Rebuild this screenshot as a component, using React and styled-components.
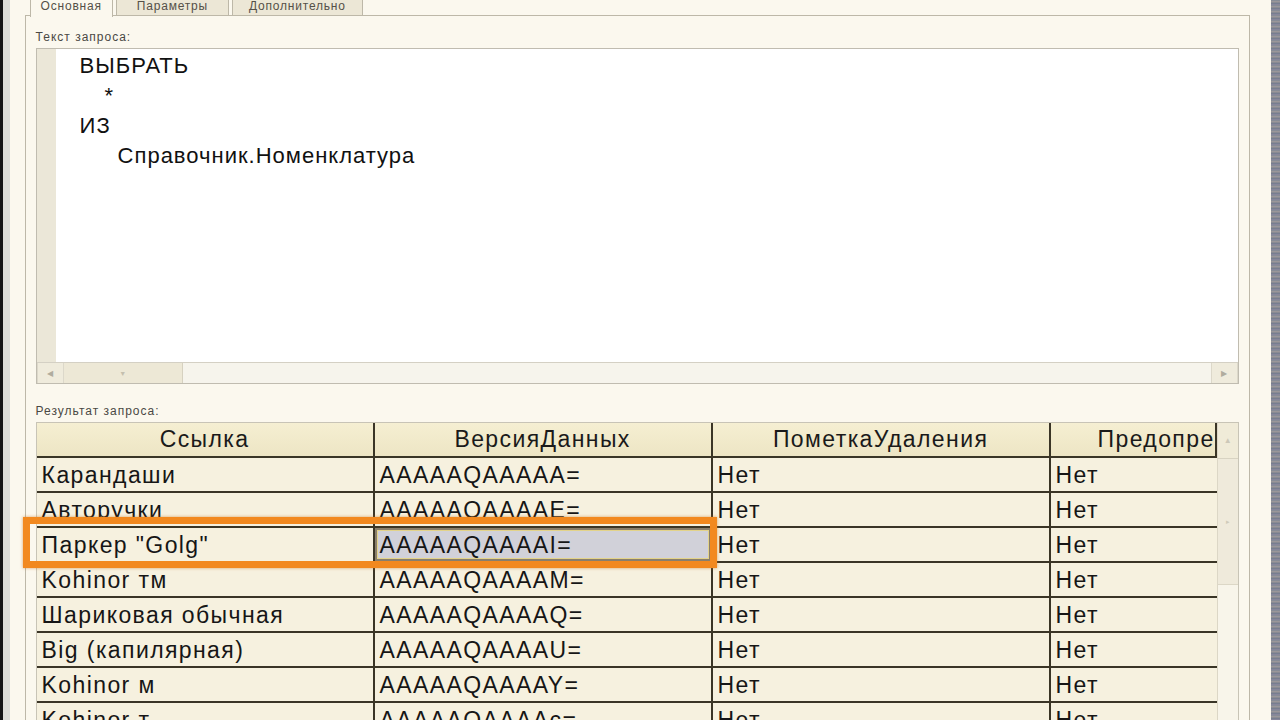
import React from "react";
import styled, { createGlobalStyle } from "styled-components";

const GlobalStyle = createGlobalStyle`
  html, body {
    margin: 0;
    padding: 0;
    background: #fbf8ee;
    font-family: "Liberation Sans", Arial, sans-serif;
  }
`;

const Screen = styled.div`
  display: flex;
  width: 1280px;
  height: 720px;
  overflow: hidden;
`;

const LeftFrame = styled.div`
  width: 7px;
  border-left: 3px solid #141414;
  background: #dcdcd6;
`;

const Desktop = styled.div`
  width: 10px;
  background: repeating-linear-gradient(
    0deg,
    #8f8aa0 0px,
    #6f7a8a 2px,
    #a49c9c 3px,
    #7c8694 5px
  );
`;

const Window = styled.div`
  flex: 1;
  display: flex;
  flex-direction: column;
  background: #fbf8ee;
  padding: 0 21px 0 15px;
`;

const TabStrip = styled.div`
  display: flex;
  height: 16px;
  padding-left: 5px;
  gap: 3px;
`;

const Tab = styled.div`
  height: ${(p) => (p.$active ? "17px" : "16px")};
  padding: 0 ${(p) => (p.$active ? "10px" : `${p.$pad || 20}px`)};
  box-sizing: border-box;
  border: 1px solid #bdb8a8;
  border-top: none;
  border-bottom: ${(p) => (p.$active ? "none" : "1px solid #bdb8a8")};
  background: ${(p) => (p.$active ? "#fbf8ee" : "#ece7d6")};
  color: #555048;
  font-size: 12px;
  letter-spacing: 0.8px;
  line-height: 12px;
  position: relative;
  z-index: 1;
`;

const TabPanel = styled.div`
  flex: 1;
  display: flex;
  flex-direction: column;
  border: 1px solid #bdb8a8;
  border-bottom: none;
  margin-top: -1px;
  padding: 14px 10px 0 10px;
`;

const Label = styled.div`
  font-size: 12px;
  letter-spacing: 1px;
  color: #4a4844;
  height: 18px;
  line-height: 14px;
`;

const Editor = styled.div`
  height: 336px;
  box-sizing: border-box;
  border: 1px solid #c0bcb0;
  display: flex;
  flex-direction: column;
  background: #ffffff;
`;

const EditorBody = styled.div`
  flex: 1;
  display: flex;
`;

const Gutter = styled.div`
  width: 19px;
  background: #ebe7d8;
`;

const Code = styled.div`
  flex: 1;
  padding: 2px 0 0 24px;
  font-size: 22px;
  letter-spacing: 1px;
  color: #111;
`;

const CodeLine = styled.div`
  height: 30px;
  line-height: 30px;
  padding-left: ${(p) => p.$indent || 0}px;
`;

const HScroll = styled.div`
  height: 20px;
  display: flex;
  border-top: 1px solid #d4d0c4;
  background: #f6f4ec;
`;

const ScrollButton = styled.div`
  width: 25px;
  display: flex;
  align-items: center;
  justify-content: center;
  background: #efebdc;
  border-right: 1px solid #dcd8ca;
  border-left: 1px solid #dcd8ca;
  color: #b0ac9e;
  font-size: 8px;
`;

const HThumb = styled.div`
  width: 118px;
  background: #ede8d6;
  border-right: 1px solid #d6d1c0;
  display: flex;
  align-items: center;
  justify-content: center;
  color: #c4bfae;
  font-size: 7px;
`;

const Spacer = styled.div`
  flex: 1;
`;

const ResultLabel = styled(Label)`
  margin-top: 20px;
`;

const TableWrap = styled.div`
  position: relative;
  flex: 1;
  display: flex;
  border: 1px solid #c8c4b6;
  border-bottom: none;
  background: #f6f1df;
`;

const Grid = styled.div`
  display: grid;
  grid-template-columns: 338px 338px 338px 166px;
  grid-auto-rows: 35px;
  align-content: start;
  overflow: hidden;
`;

const HeadCell = styled.div`
  background: linear-gradient(#f5efd2, #ede5c4);
  border-right: 2px solid #3a3526;
  border-bottom: 2px solid #3a3526;
  font-size: 23px;
  letter-spacing: 1.4px;
  color: #1a1a1a;
  display: flex;
  align-items: center;
  justify-content: ${(p) => (p.$right ? "flex-end" : "center")};
  white-space: nowrap;
  overflow: hidden;
  &:last-child {
    border-right: none;
  }
`;

const Cell = styled.div`
  border-right: ${(p) => (p.$last ? "none" : "2px solid #3a3526")};
  border-bottom: 2px solid #3a3526;
  font-size: 23px;
  letter-spacing: 1.4px;
  color: #161616;
  display: flex;
  align-items: center;
  padding: 2px 0 0 5px;
  white-space: nowrap;
  overflow: hidden;
  background: ${(p) => (p.$selected ? "#d1d1d9" : "transparent")};
  box-shadow: ${(p) =>
    p.$selected ? "inset 0 0 0 2px #8a7f6c, inset 0 0 0 3px #e3d38a" : "none"};
`;

const VScroll = styled.div`
  width: 20px;
  display: flex;
  flex-direction: column;
  border-left: 1px solid #dcd7c6;
  background: #f8f5ea;
`;

const VButton = styled.div`
  height: 35px;
  background: #f0ebd8;
  border-bottom: 1px solid #d8d3c2;
  display: flex;
  align-items: center;
  justify-content: center;
  color: #cdc8b8;
  font-size: 8px;
`;

const VThumb = styled.div`
  height: 125px;
  background: #efeadb;
  border-bottom: 1px solid #dcd7c6;
  display: flex;
  align-items: center;
  justify-content: center;
  color: #cfcaba;
  font-size: 7px;
`;

const Highlight = styled.div`
  position: absolute;
  left: -14px;
  top: 94px;
  width: 680px;
  height: 37px;
  border: 7px solid #f2891f;
  box-shadow: 0 0 3px rgba(200, 110, 20, 0.6);
  pointer-events: none;
`;

const rows = [
  ["Карандаши", "AAAAAQAAAAA="],
  ["Авторучки", "AAAAAQAAAAE="],
  ['Паркер "Golg"', "AAAAAQAAAAI="],
  ["Kohinor тм", "AAAAAQAAAAM="],
  ["Шариковая обычная", "AAAAAQAAAAQ="],
  ["Big (капилярная)", "AAAAAQAAAAU="],
  ["Kohinor м", "AAAAAQAAAAY="],
  ["Kohinor т", "AAAAAQAAAAc="],
];

export default function App() {
  return (
    <>
      <GlobalStyle />
      <Screen>
        <LeftFrame />
        <Window>
          <TabStrip>
            <Tab $active>Основная</Tab>
            <Tab>Параметры</Tab>
            <Tab $pad={16}>Дополнительно</Tab>
          </TabStrip>
          <TabPanel>
            <Label>Текст запроса:</Label>
            <Editor>
              <EditorBody>
                <Gutter />
                <Code>
                  <CodeLine>ВЫБРАТЬ</CodeLine>
                  <CodeLine $indent={25}>*</CodeLine>
                  <CodeLine>ИЗ</CodeLine>
                  <CodeLine $indent={38}>Справочник.Номенклатура</CodeLine>
                </Code>
              </EditorBody>
              <HScroll>
                <ScrollButton>◀</ScrollButton>
                <HThumb>▼</HThumb>
                <Spacer />
                <ScrollButton>▶</ScrollButton>
              </HScroll>
            </Editor>
            <ResultLabel>Результат запроса:</ResultLabel>
            <TableWrap>
              <Grid>
                <HeadCell>Ссылка</HeadCell>
                <HeadCell>ВерсияДанных</HeadCell>
                <HeadCell>ПометкаУдаления</HeadCell>
                <HeadCell $right>Предопре</HeadCell>
                {rows.map(([name, ver], i) => (
                  <React.Fragment key={i}>
                    <Cell>{name}</Cell>
                    <Cell $selected={i === 2}>{ver}</Cell>
                    <Cell>Нет</Cell>
                    <Cell $last>Нет</Cell>
                  </React.Fragment>
                ))}
              </Grid>
              <VScroll>
                <VButton>▲</VButton>
                <VThumb>▸</VThumb>
              </VScroll>
              <Highlight />
            </TableWrap>
          </TabPanel>
        </Window>
        <Desktop />
      </Screen>
    </>
  );
}
